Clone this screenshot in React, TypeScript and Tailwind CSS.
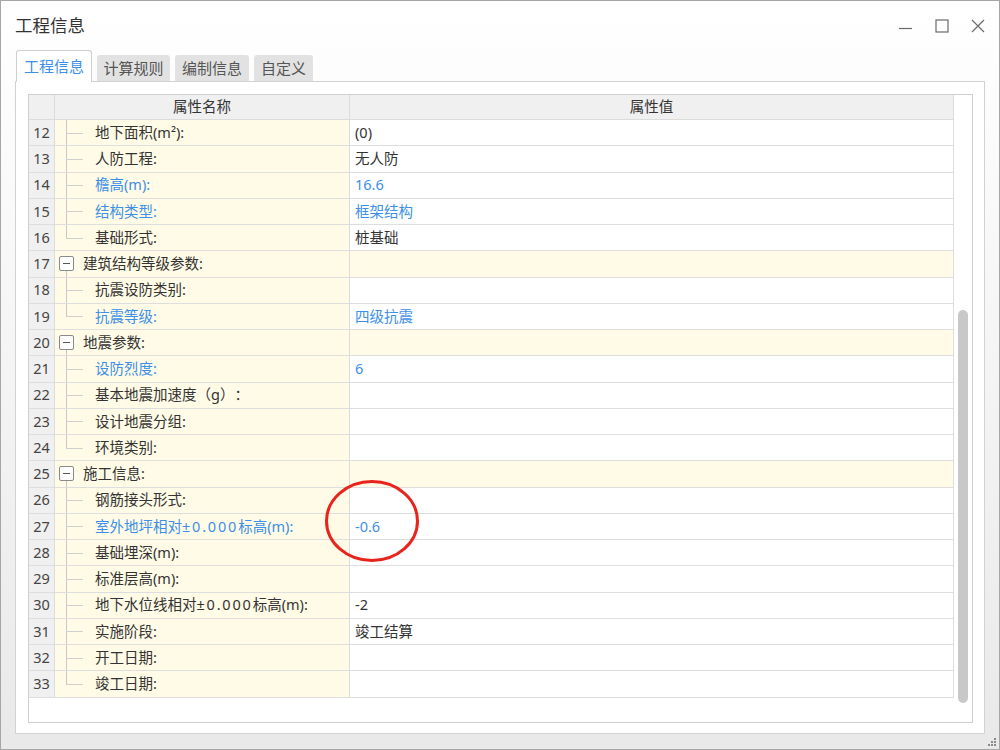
type Row = {
  n: number;
  name: string;
  value?: string;
  blue?: boolean;
  group?: boolean;
  last?: boolean;
};

const rows: Row[] = [
  { n: 12, name: "地下面积(m²):", value: "(0)" },
  { n: 13, name: "人防工程:", value: "无人防" },
  { n: 14, name: "檐高(m):", value: "16.6", blue: true },
  { n: 15, name: "结构类型:", value: "框架结构", blue: true },
  { n: 16, name: "基础形式:", value: "桩基础", last: true },
  { n: 17, name: "建筑结构等级参数:", group: true },
  { n: 18, name: "抗震设防类别:" },
  { n: 19, name: "抗震等级:", value: "四级抗震", blue: true, last: true },
  { n: 20, name: "地震参数:", group: true },
  { n: 21, name: "设防烈度:", value: "6", blue: true },
  { n: 22, name: "基本地震加速度（g）：" },
  { n: 23, name: "设计地震分组:" },
  { n: 24, name: "环境类别:", last: true },
  { n: 25, name: "施工信息:", group: true },
  { n: 26, name: "钢筋接头形式:" },
  { n: 27, name: "室外地坪相对±0.000标高(m):", value: "-0.6", blue: true },
  { n: 28, name: "基础埋深(m):" },
  { n: 29, name: "标准层高(m):" },
  { n: 30, name: "地下水位线相对±0.000标高(m):", value: "-2" },
  { n: 31, name: "实施阶段:", value: "竣工结算" },
  { n: 32, name: "开工日期:" },
  { n: 33, name: "竣工日期:", last: true },
];

const tabs = ["工程信息", "计算规则", "编制信息", "自定义"];
const tabWidths = ["w-[76px]", "w-[73px]", "w-[74px]", "w-[59px]"];

// the ±0.000 run is set a little wider, as in the original font
function Name({ text }: { text: string }) {
  const parts = text.split("±0.000");
  if (parts.length === 1) return <>{text}</>;
  return (
    <>
      {parts[0]}
      <span className="tracking-[1.8px]">±0.000</span>
      {parts[1]}
    </>
  );
}

function TreeCell({ row }: { row: Row }) {
  if (row.group) {
    return (
      <div className="relative flex h-full items-center pl-[4px]">
        <span className="flex h-[15px] w-[15px] items-center justify-center rounded-[2px] border border-[#8a8a8a] bg-white">
          <span className="h-px w-[7px] bg-[#555]" />
        </span>
        <span className="ml-[9px] text-[#333]">{row.name}</span>
        <span className="absolute left-[11px] top-[20px] bottom-0 w-px bg-[#c8c8c8]" />
      </div>
    );
  }
  return (
    <div className="relative flex h-full items-center pl-[40px]">
      <span
        className={`absolute left-[11px] top-0 w-px bg-[#c8c8c8] ${row.last ? "h-1/2" : "h-full"}`}
      />
      <span className="absolute left-[11px] top-1/2 h-px w-[17px] bg-[#d0d0d0]" />
      <span className={row.blue ? "text-[#3d8fe8]" : "text-[#333]"}>
        <Name text={row.name} />
      </span>
    </div>
  );
}

export default function App() {
  return (
    <div className="relative flex h-[750px] w-[1000px] flex-col overflow-hidden border border-[#a6a6a6] bg-gradient-to-b from-white via-[#f4f4f4] to-[#e9e9e9] font-['Noto_Sans','Noto_Sans_CJK_SC',sans-serif] text-[14.5px] [text-spacing-trim:space-all]">
      {/* title bar */}
      <div className="flex h-[49px] shrink-0 items-center justify-between pl-[14px] pr-[14px]">
        <span className="text-[17.5px] text-[#333]">工程信息</span>
        <div className="flex items-center gap-[22px] text-[#6a6a6a]">
          <svg width="14" height="14" viewBox="0 0 14 14">
            <line x1="0" y1="9.5" x2="13" y2="9.5" stroke="currentColor" strokeWidth="1.2" />
          </svg>
          <svg width="14" height="14" viewBox="0 0 14 14">
            <rect x="1" y="1" width="12" height="12" fill="none" stroke="currentColor" strokeWidth="1.2" />
          </svg>
          <svg width="14" height="14" viewBox="0 0 14 14">
            <path d="M1 1 L13 13 M13 1 L1 13" stroke="currentColor" strokeWidth="1.2" />
          </svg>
        </div>
      </div>

      {/* tabs */}
      <div className="relative z-10 ml-[15px] flex h-[32px] shrink-0 items-end gap-[5px]">
        {tabs.map((t, i) =>
          i === 0 ? (
            <div
              key={t}
              className={`${tabWidths[i]} flex h-[32px] items-center justify-center rounded-t-[3px] border border-b-0 border-[#cfcfcf] bg-white text-[15px] text-[#3d8fe8]`}
            >
              {t}
            </div>
          ) : (
            <div
              key={t}
              className={`${tabWidths[i]} mb-px flex h-[26px] items-center justify-center rounded-t-[3px] bg-[#e2e2e2] text-[15px] text-[#555]`}
            >
              {t}
            </div>
          )
        )}
      </div>

      {/* panel */}
      <div className="-mt-px ml-[14px] h-[653px] w-[970px] shrink-0 border border-[#d2d2d2] bg-white pl-[12px] pt-[12px]">
        <div className="flex h-[629px] w-[945px] border border-[#cfcfcf] bg-white">
          <div className="flex-1">
            {/* header */}
            <div className="flex h-[25px] border-b border-r border-[#dcdcdc] bg-[#f0f0f0] text-[#333]">
              <div className="w-[26px] border-r border-[#dcdcdc]" />
              <div className="flex w-[295px] items-center justify-center border-r border-[#dcdcdc]">属性名称</div>
              <div className="flex flex-1 items-center justify-center">属性值</div>
            </div>
            {rows.map((row) => (
              <div key={row.n} className="flex h-[26.25px] border-b border-r border-[#dedede]">
                <div className="flex w-[26px] items-center justify-center border-r border-[#dcdcdc] bg-[#f0f0f0] text-[#444]">
                  {row.n}
                </div>
                <div className="w-[295px] whitespace-nowrap border-r border-[#dcdcdc] bg-[#fffbe6]">
                  <TreeCell row={row} />
                </div>
                <div
                  className={`flex flex-1 items-center pl-[5px] ${row.group ? "bg-[#fffbe6]" : "bg-white"} ${row.blue ? "text-[#3d8fe8]" : "text-[#333]"}`}
                >
                  {row.value}
                </div>
              </div>
            ))}
          </div>
          {/* scrollbar */}
          <div className="flex w-[18px] flex-col bg-white pt-[215px]">
            <div className="ml-[4px] h-[393px] w-[10px] rounded-full bg-[#c8c8c8]" />
          </div>
        </div>
      </div>

      {/* resize grip */}
      <svg className="absolute bottom-[2px] right-[2px]" width="10" height="10" viewBox="0 0 10 10">
        <g fill="#8a8a8a">
          <rect x="7" y="1" width="2" height="2" />
          <rect x="4" y="4" width="2" height="2" />
          <rect x="7" y="4" width="2" height="2" />
          <rect x="1" y="7" width="2" height="2" />
          <rect x="4" y="7" width="2" height="2" />
          <rect x="7" y="7" width="2" height="2" />
        </g>
      </svg>

      {/* red annotation circle */}
      <svg className="pointer-events-none absolute left-[323px] top-[478px]" width="96" height="84" viewBox="0 0 96 84">
        <ellipse cx="48" cy="42" rx="45.5" ry="39.5" fill="none" stroke="#e8251c" strokeWidth="3" />
      </svg>
    </div>
  );
}
